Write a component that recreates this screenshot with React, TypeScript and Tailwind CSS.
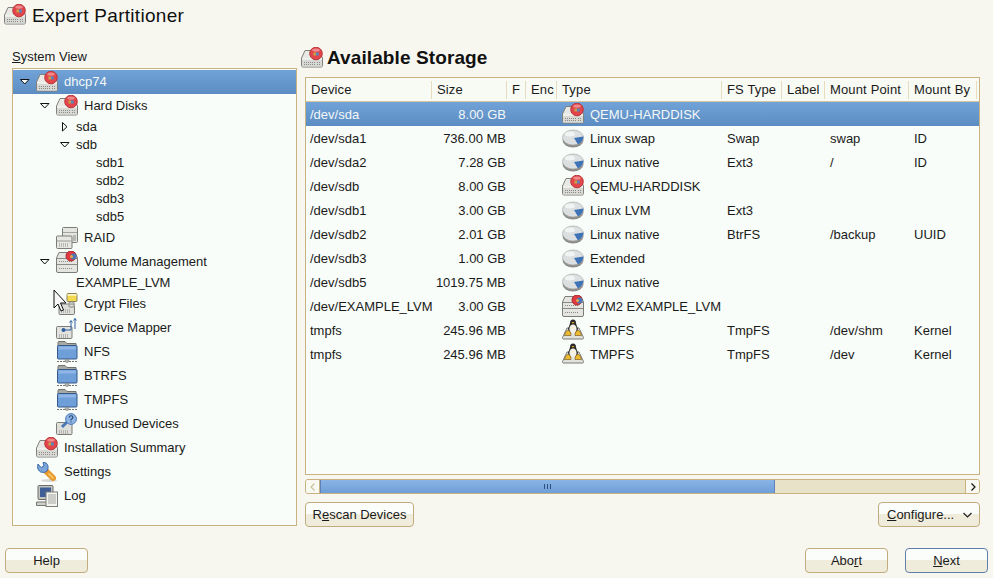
import { ReactNode } from "react";

const uiFont = "font-['Liberation_Sans',sans-serif]";

function DiskBody() {
    return (
        <g>
            <path d="M0.5 11 L4 3.5 H18 L21.5 11 V18.5 Q21.5 20 20 20 H2 Q0.5 20 0.5 18.5 Z" fill="#e8e8e4" stroke="#80807c" />
            <rect x="1" y="12.5" width="20" height="7" fill="#d8d8d4" />
            <path d="M1 12 H21" stroke="#f8f8f6" />
            <path d="M3 15.5 H15 M3 17.5 H15 M16 15.5 H19 M16 17.5 H19" stroke="#8a8a86" strokeDasharray="1 1" />
        </g>
    );
}

function RedDisc({ cx = 15, cy = 6.5 }: { cx?: number; cy?: number }) {
    return (
        <g>
            <circle cx={cx} cy={cy} r="6.3" fill="#e2454a" stroke="#b8383c" />
            <ellipse cx={cx} cy={cy - 3.4} rx="3.8" ry="1.7" fill="#ee8a8c" />
            <path d={`M${cx - 2.6} ${cy - 1} h2.6 v3 h-2.6 z`} fill="#c9a04a" />
            <path d={`M${cx} ${cy - 1} h2.8 v3 h-2.8 z`} fill="#5a86bc" />
        </g>
    );
}

function HardDiskIcon() {
    return (
        <svg width="22" height="22" viewBox="0 0 22 22">
            <DiskBody />
            <RedDisc />
        </svg>
    );
}

function RaidIcon() {
    return (
        <svg width="22" height="22" viewBox="0 0 22 22">
            <rect x="6.5" y="0.5" width="15" height="15" rx="1" fill="#e4e4e0" stroke="#7c7c78" />
            <path d="M7 5.5 H21" stroke="#a4a4a0" />
            <path d="M17 9 H20 M17 11 H20 M17 13 H20" stroke="#8a8a86" />
            <rect x="0.5" y="9" width="15.5" height="12.5" rx="1" fill="#e6e6e2" stroke="#7c7c78" />
            <path d="M1 14 H15.5" stroke="#9a9a96" />
            <path d="M3 17 H13 M3 19 H13" stroke="#8a8a86" strokeDasharray="1 1" />
        </svg>
    );
}

function VolumeIcon() {
    return (
        <svg width="22" height="22" viewBox="0 0 22 22">
            <path d="M0.5 7 L3 1.5 H19 L21.5 7 V20 Q21.5 21.5 20 21.5 H2 Q0.5 21.5 0.5 20 Z" fill="#e4e4e0" stroke="#7c7c78" />
            <path d="M1 13.5 H21 M1 7.5 H21" stroke="#8a8a86" />
            <path d="M3 10.5 H17 M3 17.5 H17" stroke="#8a8a86" strokeDasharray="1 1" />
            <circle cx="15" cy="5" r="5" fill="#e0393f" stroke="#a8282c" />
            <circle cx="17.5" cy="5.5" r="3" fill="#4a78b8" />
            <circle cx="15.5" cy="5.5" r="1.5" fill="#e6a83a" />
        </svg>
    );
}

function CryptIcon() {
    return (
        <svg width="22" height="22" viewBox="0 0 22 22">
            <rect x="3" y="11" width="15.5" height="10.5" rx="1" fill="#dededa" stroke="#7c7c78" />
            <path d="M5 17 H15 M5 19 H15" stroke="#8a8a86" strokeDasharray="1 1" />
            <circle cx="15.5" cy="11.5" r="2.8" fill="none" stroke="#a4a4a0" strokeWidth="1.4" />
            <rect x="11" y="0.5" width="10" height="8" rx="1" fill="#f2d94e" stroke="#8a8468" />
            <rect x="11.5" y="1" width="9" height="2" fill="#f8f0b0" />
        </svg>
    );
}

function MapperIcon() {
    return (
        <svg width="22" height="22" viewBox="0 0 22 22">
            <rect x="0.5" y="9.5" width="15.5" height="12" rx="1" fill="#e2e2de" stroke="#7c7c78" />
            <path d="M3 18 H13 M3 20 H13" stroke="#8a8a86" strokeDasharray="1 1" />
            <circle cx="7.5" cy="13" r="2" fill="#2f5f9f" />
            <path d="M8 13 H15 V4 M19 12 V1.5 M13.5 5.5 L15 3.5 L16.5 5.5 M17.5 3.5 L19 1.5 L20.5 3.5" fill="none" stroke="#2f5f9f" />
        </svg>
    );
}

function FolderIcon() {
    return (
        <svg width="22" height="22" viewBox="0 0 22 22">
            <path d="M2 16 V1.5 Q2 0.5 3 0.5 H9 L11 2.5 H20 V16 Z" fill="#a8a8a4" stroke="#70706c" />
            <rect x="1.5" y="4.5" width="19.5" height="13.5" rx="1" fill="#6f9fd8" stroke="#36598c" />
            <rect x="2.5" y="5.5" width="17.5" height="3" fill="#8fb6e6" />
            <path d="M1 20.5 H21" stroke="#77776f" strokeDasharray="2 1" />
            <circle cx="11" cy="19.7" r="1.8" fill="#b4b4b0" stroke="#66665f" strokeWidth="0.5" />
        </svg>
    );
}

function UnusedIcon() {
    return (
        <svg width="22" height="22" viewBox="0 0 22 22">
            <rect x="0.5" y="9.5" width="15.5" height="12" rx="1" fill="#dededa" stroke="#7c7c78" />
            <path d="M3 18 H13 M3 20 H13" stroke="#8a8a86" strokeDasharray="1 1" />
            <path d="M6 14 L11 9" stroke="#4c78b4" strokeWidth="3" />
            <circle cx="15" cy="6" r="5.4" fill="#8fb6e6" stroke="#4c78b4" />
            <path d="M13.2 4.6 Q13.4 2.8 15 2.8 Q16.9 2.8 16.9 4.5 Q16.9 5.6 15 6.6 V7.6 M15 8.6 V9.6" fill="none" stroke="#24466f" strokeWidth="1.1" />
        </svg>
    );
}

function WrenchIcon() {
    return (
        <svg width="22" height="22" viewBox="0 0 22 22">
            <ellipse cx="13" cy="19.5" rx="8" ry="1.5" fill="#d8d8d4" />
            <path d="M10 10 L17 17" stroke="#e8982c" strokeWidth="6" strokeLinecap="round" />
            <path d="M13 13 L17 17" stroke="#f4c060" strokeWidth="2" strokeLinecap="round" />
            <path d="M2 3 L5 6.5 L8 5 L7 1.5 Q11 1 12 5 Q12.5 8 11 10 L8.5 11.5 Q4 12 2 8.5 Q1.2 5.5 2 3 Z" fill="#7aa6dc" stroke="#3f6aa4" />
        </svg>
    );
}

function LogIcon() {
    return (
        <svg width="22" height="22" viewBox="0 0 22 22">
            <rect x="2" y="0.5" width="15" height="14" rx="1" fill="#c4c4c0" stroke="#6c6c68" />
            <rect x="4" y="2.5" width="11" height="9.5" fill="#3f5f96" />
            <path d="M0.5 17 H12 V20.5 H0.5 Z" fill="#cfcfcb" stroke="#77776f" />
            <rect x="10" y="7" width="11.5" height="14.5" fill="#f4f4f0" stroke="#7c7c78" />
            <path d="M12 10 H20 M12 12 H20 M12 14 H20 M12 16 H20 M12 18 H20" stroke="#a4a4a0" />
        </svg>
    );
}

function PartitionIcon() {
    return (
        <svg width="22" height="22" viewBox="0 0 22 22">
            <ellipse cx="11" cy="13" rx="10.5" ry="7.5" fill="#8e8e8a" />
            <ellipse cx="11" cy="10.5" rx="10.5" ry="7.5" fill="#dcdfe0" stroke="#a4a4a0" strokeWidth="0.6" />
            <ellipse cx="8" cy="7" rx="5" ry="2.5" fill="#f2f3f3" />
            <path d="M12 11 L21.5 9.5 Q21.5 14 16 17.5 Z" fill="#3f73b8" />
        </svg>
    );
}

function TuxIcon() {
    return (
        <svg width="22" height="22" viewBox="0 0 22 22">
            <path d="M0.5 18.5 L5 9 H17 L21.5 18.5 V19 Q21.5 20 20.5 20 H1.5 Q0.5 20 0.5 19 Z" fill="#e0e0dc" stroke="#7c7c78" />
            <path d="M11 0.5 Q14 0.5 14 4 Q14.5 7 16 9.5 L15 14 H7 L6 9.5 Q7.5 7 8 4 Q8 0.5 11 0.5 Z" fill="#2a2a2a" />
            <ellipse cx="11" cy="10" rx="3.6" ry="4.6" fill="#f4f2e6" />
            <path d="M9.5 3 H12.5 L11 4.8 Z" fill="#e8a82c" />
            <path d="M2.5 16.5 Q4 10.5 7 11.5 Q9.5 13.5 9 16.5 Z" fill="#eeba30" stroke="#6a5018" strokeWidth="0.6" />
            <path d="M19.5 16.5 Q18 10.5 15 11.5 Q12.5 13.5 13 16.5 Z" fill="#eeba30" stroke="#6a5018" strokeWidth="0.6" />
        </svg>
    );
}

function OpenArrow({ open }: { open: boolean }) {
    return (
        <svg width="10" height="10" viewBox="0 0 10 10">
            {open ? (
                <path d="M0.5 2.5 H9 L4.75 7 Z" fill="#f8fcf8" stroke="#111" />
            ) : (
                <path d="M2.5 0.5 V9 L7 4.75 Z" fill="#f8fcf8" stroke="#111" />
            )}
        </svg>
    );
}

interface TreeNode {
    label: string;
    level: number;
    icon?: ReactNode;
    arrow?: "open" | "closed";
    selected?: boolean;
    tall?: boolean;
}

const treeNodes: TreeNode[] = [
    { label: "dhcp74", level: 0, icon: <HardDiskIcon />, arrow: "open", selected: true, tall: true },
    { label: "Hard Disks", level: 1, icon: <HardDiskIcon />, arrow: "open", tall: true },
    { label: "sda", level: 2, arrow: "closed" },
    { label: "sdb", level: 2, arrow: "open" },
    { label: "sdb1", level: 3 },
    { label: "sdb2", level: 3 },
    { label: "sdb3", level: 3 },
    { label: "sdb5", level: 3 },
    { label: "RAID", level: 1, icon: <RaidIcon />, tall: true },
    { label: "Volume Management", level: 1, icon: <VolumeIcon />, arrow: "open", tall: true },
    { label: "EXAMPLE_LVM", level: 2 },
    { label: "Crypt Files", level: 1, icon: <CryptIcon />, tall: true },
    { label: "Device Mapper", level: 1, icon: <MapperIcon />, tall: true },
    { label: "NFS", level: 1, icon: <FolderIcon />, tall: true },
    { label: "BTRFS", level: 1, icon: <FolderIcon />, tall: true },
    { label: "TMPFS", level: 1, icon: <FolderIcon />, tall: true },
    { label: "Unused Devices", level: 1, icon: <UnusedIcon />, tall: true },
    { label: "Installation Summary", level: 0, icon: <HardDiskIcon />, tall: true },
    { label: "Settings", level: 0, icon: <WrenchIcon />, tall: true },
    { label: "Log", level: 0, icon: <LogIcon />, tall: true },
];

const levelPadding = ["pl-[7px]", "pl-[27px]", "pl-[47px]", "pl-[67px]"];

function TreeRow({ node }: { node: TreeNode }) {
    return (
        <div
            className={`flex items-center ${levelPadding[node.level]} ${node.tall ? "h-6" : "h-[18px]"} ${
                node.selected ? "bg-gradient-to-b from-[#71a2d8] to-[#5b8cc2] text-[#f4f8f6]" : ""
            }`}
        >
            <div className="flex w-4 shrink-0 items-center">
                {node.arrow && <OpenArrow open={node.arrow === "open"} />}
            </div>
            {node.icon && <div className="mr-1.5 h-[22px] w-[22px] shrink-0">{node.icon}</div>}
            <span className="whitespace-nowrap">{node.label}</span>
        </div>
    );
}

interface StorageRow {
    device: string;
    size: string;
    icon: ReactNode;
    type: string;
    fs?: string;
    mount?: string;
    by?: string;
}

const storageRows: StorageRow[] = [
    { device: "/dev/sda", size: "8.00 GB", icon: <HardDiskIcon />, type: "QEMU-HARDDISK" },
    { device: "/dev/sda1", size: "736.00 MB", icon: <PartitionIcon />, type: "Linux swap", fs: "Swap", mount: "swap", by: "ID" },
    { device: "/dev/sda2", size: "7.28 GB", icon: <PartitionIcon />, type: "Linux native", fs: "Ext3", mount: "/", by: "ID" },
    { device: "/dev/sdb", size: "8.00 GB", icon: <HardDiskIcon />, type: "QEMU-HARDDISK" },
    { device: "/dev/sdb1", size: "3.00 GB", icon: <PartitionIcon />, type: "Linux LVM", fs: "Ext3" },
    { device: "/dev/sdb2", size: "2.01 GB", icon: <PartitionIcon />, type: "Linux native", fs: "BtrFS", mount: "/backup", by: "UUID" },
    { device: "/dev/sdb3", size: "1.00 GB", icon: <PartitionIcon />, type: "Extended" },
    { device: "/dev/sdb5", size: "1019.75 MB", icon: <PartitionIcon />, type: "Linux native" },
    { device: "/dev/EXAMPLE_LVM", size: "3.00 GB", icon: <VolumeIcon />, type: "LVM2 EXAMPLE_LVM" },
    { device: "tmpfs", size: "245.96 MB", icon: <TuxIcon />, type: "TMPFS", fs: "TmpFS", mount: "/dev/shm", by: "Kernel" },
    { device: "tmpfs", size: "245.96 MB", icon: <TuxIcon />, type: "TMPFS", fs: "TmpFS", mount: "/dev", by: "Kernel" },
];

const columnGrid = "grid grid-cols-[126px_75px_19px_31px_165px_60px_43px_84px_68px_1fr]";

const headers = ["Device", "Size", "F", "Enc", "Type", "FS Type", "Label", "Mount Point", "Mount By"];

function StorageTable() {
    return (
        <div className="h-[398px] overflow-hidden border border-[#c9b27f] bg-[#f8fdf9]">
            <div className={`${columnGrid} h-6 border-b border-[#d8c69c] bg-[#f8fbf4] tracking-[0.15px]`}>
                {headers.map((h) => (
                    <div key={h} className="flex h-[18px] items-center self-center overflow-hidden whitespace-nowrap border-r border-[#e6dcc0] pl-[5px]">
                        {h}
                    </div>
                ))}
            </div>
            {storageRows.map((row, i) => (
                <div
                    key={i}
                    className={`${columnGrid} h-6 items-center pt-0.5 ${
                        i === 0 ? "bg-gradient-to-b from-[#71a2d8] to-[#5b8cc2] text-[#f4f8f6]" : ""
                    }`}
                >
                    <div className="whitespace-nowrap pl-1">{row.device}</div>
                    <div className="whitespace-nowrap pr-px text-right">{row.size}</div>
                    <div />
                    <div />
                    <div className="flex items-center whitespace-nowrap pl-[5px]">
                        <div className="mr-1.5 -mt-0.5 h-[22px] w-[22px] shrink-0">{row.icon}</div>
                        {row.type}
                    </div>
                    <div className="pl-[5px]">{row.fs}</div>
                    <div />
                    <div className="pl-[5px]">{row.mount}</div>
                    <div className="pl-[5px]">{row.by}</div>
                    <div />
                </div>
            ))}
        </div>
    );
}

function ScrollBar() {
    return (
        <div className="mt-1 flex h-[15px] overflow-hidden rounded-[3px] border border-[#c9b27f] bg-[#e8e3c8]">
            <div className="flex w-3.5 items-center justify-center border-r border-[#c9b27f] bg-[#f8f9f0]">
                <svg width="6" height="8" viewBox="0 0 6 8">
                    <path d="M4.5 0.5 L1 4 L4.5 7.5" fill="none" stroke="#c9c0a0" strokeWidth="1.2" />
                </svg>
            </div>
            <div className="flex w-[455px] items-center justify-center gap-0.5 border-x border-[#5f80b8] bg-gradient-to-b from-[#8ab4e6] to-[#6f9fd8]">
                <span className="h-[5px] w-px bg-[#2f4f7f]" />
                <span className="h-[5px] w-px bg-[#2f4f7f]" />
                <span className="h-[5px] w-px bg-[#2f4f7f]" />
            </div>
            <div className="flex-1" />
            <div className="flex w-3.5 items-center justify-center border-l border-[#c9b27f] bg-[#f8f9f0]">
                <svg width="6" height="8" viewBox="0 0 6 8">
                    <path d="M1.5 0.5 L5 4 L1.5 7.5" fill="none" stroke="#111" strokeWidth="1.2" />
                </svg>
            </div>
        </div>
    );
}

function Btn({ children, width, focused }: { children: ReactNode; width: string; focused?: boolean }) {
    return (
        <button
            className={`flex h-[25px] ${width} items-center justify-center rounded-[4px] border bg-gradient-to-b from-[#fafdfa] from-50% to-[#efecdc] to-50% ${
                focused ? "border-[#5f7fa8]" : "border-[#c2ab7c]"
            }`}
        >
            {children}
        </button>
    );
}

export default function App() {
    return (
        <div className={`relative flex h-[578px] w-[993px] flex-col overflow-hidden bg-[#f7f7f0] text-[13px] text-[#1a1a1a] ${uiFont}`}>
            <div className="flex h-[46px] items-start pl-1 pt-[4px]">
                <div className="h-[22px] w-[22px]">
                    <HardDiskIcon />
                </div>
                <h1 className="ml-1.5 text-[19px] leading-6 tracking-[0.3px] text-[#111]">Expert Partitioner</h1>
            </div>

            <div className="flex pl-3">
                <div className="w-[285px]">
                    <div className="flex h-[22px] items-center">
                        <span><u>S</u>ystem View</span>
                    </div>
                    <div className="h-[458px] border border-[#c9b27f] bg-[#f8fdf9] pt-px">
                        {treeNodes.map((node) => (
                            <TreeRow key={node.label} node={node} />
                        ))}
                    </div>
                </div>

                <div className="ml-2 w-[675px]">
                    <div className="-ml-1 flex h-[31px] items-center pb-2">
                        <div className="h-[22px] w-[22px]">
                            <HardDiskIcon />
                        </div>
                        <h2 className="ml-1 text-[19px] font-bold leading-6 tracking-[0.1px] text-[#111]">Available Storage</h2>
                    </div>
                    <StorageTable />
                    <ScrollBar />
                    <div className="mt-2 flex justify-between">
                        <Btn width="w-[109px]">
                            <span>R<u>e</u>scan Devices</span>
                        </Btn>
                        <button className="flex h-[25px] w-[102px] items-center justify-between rounded-[4px] border border-[#c2ab7c] bg-gradient-to-b from-[#fafdfa] from-50% to-[#efecdc] to-50% pl-2 pr-[7px]">
                            <span><u>C</u>onfigure...</span>
                            <svg width="9" height="6" viewBox="0 0 9 6">
                                <path d="M0.5 1 L4.5 5 L8.5 1" fill="none" stroke="#222" strokeWidth="1.2" />
                            </svg>
                        </button>
                    </div>
                </div>
            </div>

            <div className="mt-[21px] flex justify-between px-[5px]">
                <Btn width="w-[83px]">Help</Btn>
                <div className="flex gap-[17px]">
                    <Btn width="w-[83px]">
                        <span>Abo<u>r</u>t</span>
                    </Btn>
                    <Btn width="w-[83px]" focused>
                        <span><u>N</u>ext</span>
                    </Btn>
                </div>
            </div>

            {/* mouse pointer sits over the tree */}
            <svg className="absolute left-[53px] top-[289px]" width="14" height="24" viewBox="0 0 14 24">
                <path d="M1 1 V19 L5 15 L8 22 L10.5 21 L7.5 14 H13 Z" fill="#f8f8f8" stroke="#111" />
            </svg>
        </div>
    );
}
